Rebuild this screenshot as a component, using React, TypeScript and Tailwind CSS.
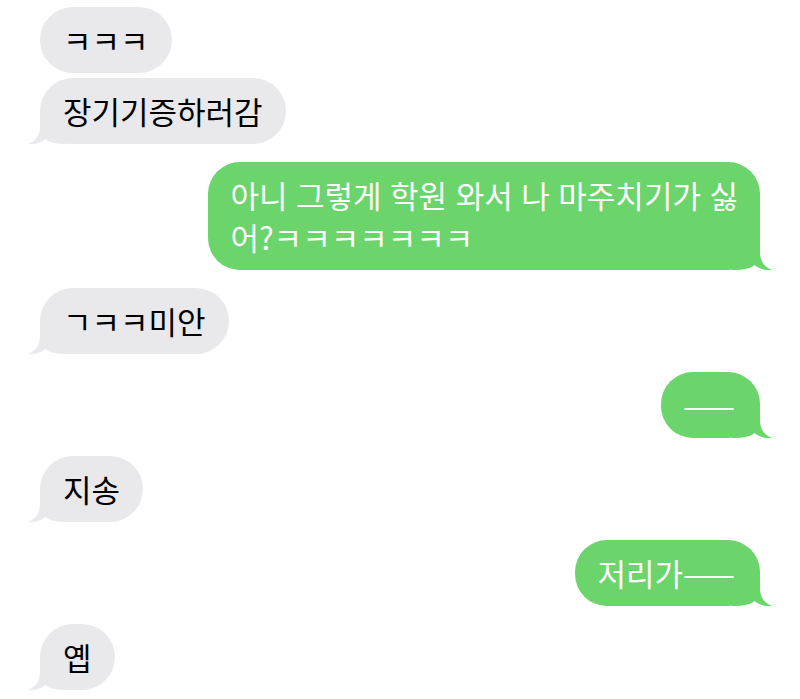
import React from "react";

type Msg = { text: React.ReactNode; me: boolean; tail: boolean };

const FONT = { fontFamily: '"Noto Sans CJK KR", "Noto Sans", sans-serif' };

function Dashes() {
  return <span className="tracking-[3px]">——</span>;
}

// Consecutive messages from the same sender sit in one group.
const groups: Msg[][] = [
  [
    { text: "ㅋㅋㅋ", me: false, tail: false },
    { text: "장기기증하러감", me: false, tail: true },
  ],
  [
    {
      text: (
        <>
          아니 그렇게 학원 와서 나 마주치기가 싫
          <br />
          어?ㅋㅋㅋㅋㅋㅋㅋ
        </>
      ),
      me: true,
      tail: true,
    },
  ],
  [{ text: "ㄱㅋㅋ미안", me: false, tail: true }],
  [{ text: <Dashes />, me: true, tail: true }],
  [{ text: "지송", me: false, tail: true }],
  [
    {
      text: (
        <>
          저리가
          <Dashes />
        </>
      ),
      me: true,
      tail: true,
    },
  ],
  [{ text: "옙", me: false, tail: true }],
];

function Tail({ color, right }: { color: string; right: boolean }) {
  return (
    <svg
      width="40"
      height="34"
      viewBox="0 0 40 34"
      className={
        right
          ? "absolute bottom-0 right-[-12px] scale-x-[-1]"
          : "absolute bottom-0 left-[-12px]"
      }
    >
      <path
        d="M12 0 L12 16 C12 25 8 31 0 34 C7 34.6 13 32.5 17.5 29 C21 32.5 27 34 40 34 L40 0 Z"
        fill={color}
      />
    </svg>
  );
}

function Bubble({ m }: { m: Msg }) {
  const color = m.me ? "#6bd46a" : "#e9e9eb";
  return (
    <div
      className={
        m.me
          ? "relative self-end whitespace-nowrap rounded-[32px] bg-[#6bd46a] px-[22px] py-[12px] text-[31px] leading-[42px] text-white [word-spacing:1.6px]"
          : "relative self-start whitespace-nowrap rounded-[33px] bg-[#e9e9eb] px-[23px] py-[12px] text-[31px] leading-[42px] text-black"
      }
      style={FONT}
    >
      {m.tail && <Tail color={color} right={m.me} />}
      <span className="relative">{m.text}</span>
    </div>
  );
}

export default function App() {
  return (
    <div className="h-[699px] w-[800px] overflow-hidden bg-white">
      <div className="flex flex-col gap-[18px] px-[40px] pt-[7px]">
        {groups.map((g, i) => (
          <div key={i} className="flex flex-col gap-[5px]">
            {g.map((m, j) => (
              <Bubble key={j} m={m} />
            ))}
          </div>
        ))}
      </div>
    </div>
  );
}
